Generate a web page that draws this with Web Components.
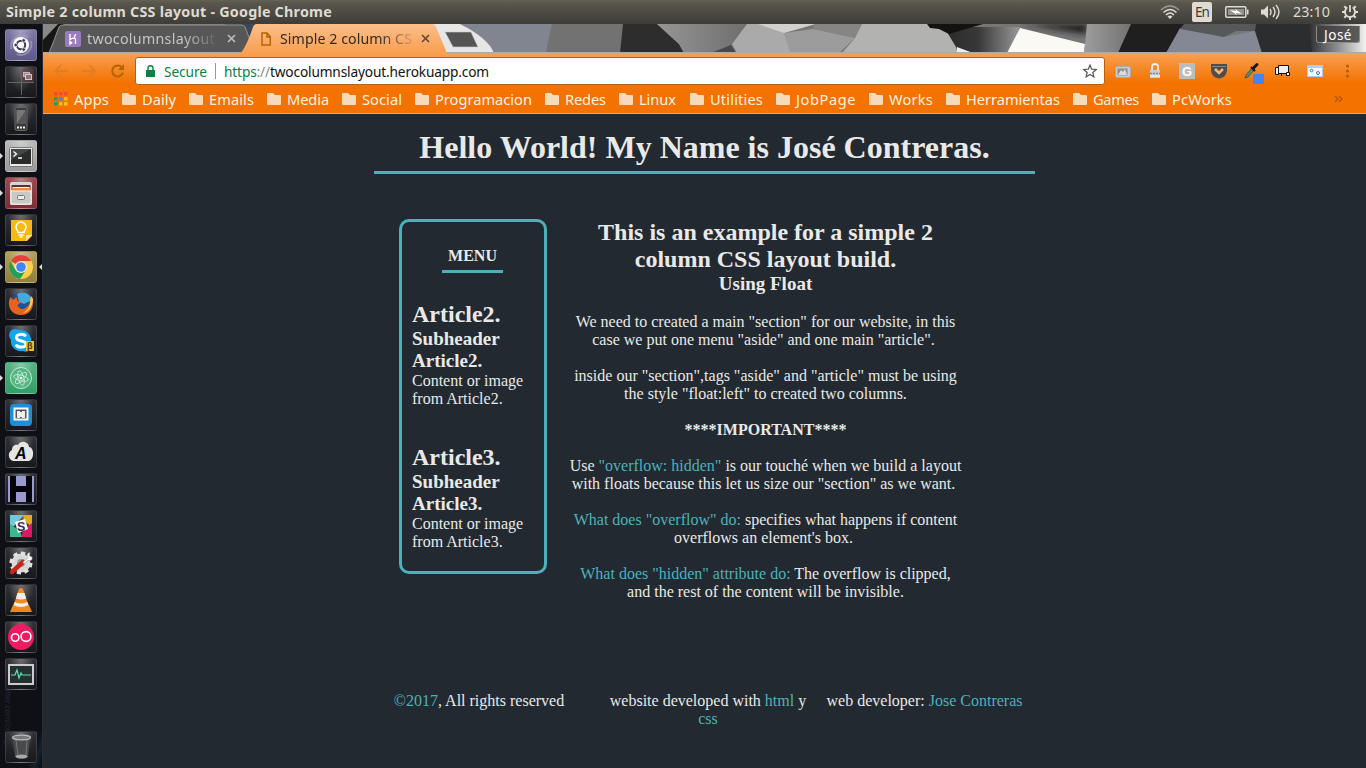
<!DOCTYPE html>
<html lang="en">
<head>
<meta charset="utf-8">
<title>Simple 2 column CSS layout</title>
<style>
html,body{margin:0;height:100%;overflow:hidden;background:#222930}
body{font-family:"Liberation Serif",serif}
</style>
</head>
<body>
<desk-shell>
  <top-panel slot="panel"></top-panel>
  <app-launcher slot="launcher">
    <launch-tile style="--c:#7c76a6;--d:#5f5a88"><svg viewBox="0 0 32 32"><g fill="none" stroke="#aaa5cc" stroke-width="2" opacity=".6"><path d="M6 20C5 8 16 4 23 8M26 12c2 11-7 16-14 13"/></g><circle cx="16" cy="16" r="8" fill="#fff"/><circle cx="16" cy="16" r="4.2" fill="none" stroke="#39355a" stroke-width="2"/><g fill="#39355a" stroke="#fff" stroke-width=".7"><circle cx="10.7" cy="16" r="1.8"/><circle cx="18.7" cy="11.4" r="1.8"/><circle cx="18.7" cy="20.6" r="1.8"/></g></svg></launch-tile>
    <launch-tile><svg viewBox="0 0 32 32"><path d="M17 3h12v13H17z" fill="#6b3b48" opacity=".5"/><path d="M3 16.500h26M16.500 4v25" stroke="#666" /><rect x="18.500" y="6.500" width="6" height="4" fill="#a88" stroke="#c5b5ba"/><rect x="20.500" y="8.500" width="6" height="5" fill="#8b7179" stroke="#d5c8cc"/></svg></launch-tile>
    <launch-tile><svg viewBox="0 0 32 32"><rect x="10" y="4.500" width="12" height="23" rx="1.500" fill="#3a3a3a" stroke="#666"/><rect x="11.500" y="7" width="9" height="14" fill="#777"/><path d="M11.500 21L20.500 8v13z" fill="#555"/><path d="M12 24.500h8" stroke="#eee" stroke-width="2" stroke-dasharray="2 1"/></svg></launch-tile>
    <launch-tile run style="--c:#b9b9b9;--d:#999"><svg viewBox="0 0 32 32"><rect x="4.500" y="7.500" width="23" height="19" rx="1" fill="#e8e8e8" stroke="#777"/><rect x="6" y="9" width="20" height="15" fill="#2a2c2b"/><path d="M6 9h20L6 20z" fill="#454746"/><path d="M8.500 11.500l3 2.500-3 2.500M13 18h4" fill="none" stroke="#fff" stroke-width="1.300"/></svg></launch-tile>
    <launch-tile run style="--c:#9c4851;--d:#7c2d36"><svg viewBox="0 0 32 32"><rect x="5" y="5" width="22" height="23" rx="2" fill="#d8d6d2"/><path d="M6.500 8h19v5h-19z" fill="#533"/><path d="M7 10h18v4H7z" fill="#ee8848"/><path d="M8 10.500h16" stroke="#fff"/><rect x="6" y="14" width="20" height="13" fill="#c9c8c6" stroke="#eee"/><rect x="12.500" y="18.500" width="7" height="4" rx="1" fill="#eee" stroke="#777"/></svg></launch-tile>
    <launch-tile><svg viewBox="0 0 32 32"><path d="M6 6h21v16l-5 5H6z" fill="#f9b90f"/><path d="M27 21l-6 6v-6z" fill="#ffe596"/><path d="M13 18.500c0-2-2-3-2-5.500a5 5 0 0 1 10 0c0 2.500-2 3.500-2 5.500z" fill="none" stroke="#fff" stroke-width="1.500"/><path d="M13.500 21h5M14.500 23h3" stroke="#fff" stroke-width="1.500"/></svg></launch-tile>
    <launch-tile run focused style="--c:#b2a05d;--d:#917f3c"><svg viewBox="0 0 32 32"><circle cx="16" cy="16" r="12" fill="#fed04a"/><path d="M16 16L5.600 10A12 12 0 0 1 26.400 10H16z" fill="#e04637"/><path d="M5.600 10A12 12 0 0 0 15 28l6-9-5-3-5.500 3z" fill="#279e57"/><circle cx="16" cy="16" r="6" fill="#eee"/><circle cx="16" cy="16" r="4.800" fill="#4286f4"/></svg></launch-tile>
    <launch-tile><svg viewBox="0 0 32 32"><circle cx="17" cy="15.500" r="11" fill="#16539e"/><path d="M12 6c6-4 14 0 15 6l-8 4-5-2z" fill="#47a8dc"/><path d="M28 11c1 10-4 16-12 16C8 27 3 21 4 13l1.500-4 3 3 3-3 1 4 4 1-4 3c2 5 7 5 10 1 3-2 4-7 4-10z" fill="#e9601f"/><path d="M28 11c0 7-4 13-10 14 5-3 7-7 7-12l1-5z" fill="#ffc73b"/></svg></launch-tile>
    <launch-tile><svg viewBox="0 0 32 32"><path d="M10 4c2 0 3 1 5 1 7 0 12 5 11 12 3 6-3 12-8 9-7 1-13-4-12-11C2 10 5 4 10 4z" fill="#10a7eb"/><path d="M20.500 11.500c-1-3-9-3-9 1 0 5 9.500 2 9.500 6.500 0 4-9 4-10 .5" fill="none" stroke="#fff" stroke-width="3"/><rect x="21" y="16" width="8" height="10" fill="#f0bc2e"/><text x="22" y="24" font-size="9" font-weight="bold" font-family="Liberation Sans" fill="#443208">β</text></svg></launch-tile>
    <launch-tile run style="--c:#58b185;--d:#32a068"><svg viewBox="0 0 32 32"><circle cx="16" cy="16" r="10.500" fill="#55b684" stroke="#c4e7d3"/><g fill="none" stroke="#c9e8d6" stroke-width=".9"><ellipse cx="16" cy="16" rx="7.500" ry="2.800" transform="rotate(15 16 16)"/><ellipse cx="16" cy="16" rx="7.500" ry="2.800" transform="rotate(75 16 16)"/><ellipse cx="16" cy="16" rx="7.500" ry="2.800" transform="rotate(135 16 16)"/></g><circle cx="16" cy="16" r="1.300" fill="#fff"/></svg></launch-tile>
    <launch-tile><svg viewBox="0 0 32 32"><rect x="5" y="5" width="22" height="22" rx="4" fill="#1b8fda"/><path d="M9.500 9.500h13v11h-13z" fill="#555" stroke="#fff" stroke-width="2"/><path d="M12 12h3v1h2v-1h3v7h-3v-1h-2v1h-3z" fill="#eee"/></svg></launch-tile>
    <launch-tile><svg viewBox="0 0 32 32"><path d="M8 25a6 6 0 0 1-1-11c0-5 4-6 6-5 3-6 11-3 11 2 5 0 6 12 0 14z" fill="#e5e5e5"/><text x="10" y="23" font-size="16" font-weight="bold" font-style="italic" font-family="Liberation Sans" fill="#050505">A</text></svg></launch-tile>
    <launch-tile><svg viewBox="0 0 32 32"><path d="M3 3h26v26H3z" fill="#9b9ad0"/><path d="M5 3h6v10h10V3h6v26h-6V19H11v10H5z" fill="#050509"/></svg></launch-tile>
    <launch-tile><svg viewBox="0 0 32 32"><path d="M5 5h14L9 16H5z" fill="#70cadb"/><path d="M18 5h9v12l-8-6z" fill="#e9a820"/><path d="M27 13v14H16l3-8z" fill="#e01765"/><path d="M5 14l10 7 2 6H5z" fill="#3eb890"/><path d="M10 12l10-3 3 10-10 4z" fill="#fff"/><text x="12" y="20.500" font-size="12.500" font-weight="bold" font-family="Liberation Sans" fill="#462148">S</text></svg></launch-tile>
    <launch-tile><svg viewBox="0 0 32 32"><circle cx="16" cy="16" r="9.500" fill="#d8d8d8" stroke="#e2e2e2" stroke-width="4" stroke-dasharray="4 3.400"/><circle cx="16" cy="16" r="4" fill="#999"/><path d="M7 25l11-10" stroke="#c72719" stroke-width="4.500" stroke-linecap="round"/><path d="M18 15l5-4c-2-3 0-6 2-5l-1 3 3 1c1 4-3 4-4 3l-4 4z" fill="#fff" stroke="#999" stroke-width=".5"/></svg></launch-tile>
    <launch-tile><svg viewBox="0 0 32 32"><path d="M8 21h16l3 7H5z" fill="#f38417"/><path d="M14 5q2-2 4 0l6 18q-8 5-16 0z" fill="#f08b1d"/><path d="M12.500 9h7l1.700 5.500q-5 2-10.300 0zM9.500 18q6.500 3 13 0l1 3q-7.500 4-15 0z" fill="#eee"/></svg></launch-tile>
    <launch-tile><svg viewBox="0 0 32 32"><circle cx="16" cy="16" r="13" fill="#ed1b60"/><g fill="none" stroke="#fff" stroke-width="1.600"><circle cx="10.200" cy="16.500" r="3.700"/><circle cx="21" cy="15.500" r="4.900"/></g></svg></launch-tile>
    <launch-tile><svg viewBox="0 0 32 32"><rect x="4" y="7" width="24" height="19" fill="#26302f" stroke="#ccc" stroke-width="2"/><path d="M6 17h4l2-5 2 8 2-5 1 2h9" fill="none" stroke="#5ce0bd" stroke-width="1.200"/></svg></launch-tile>
    <launch-tile end><svg viewBox="0 0 32 32"><path d="M8 6h17l-2 20q-6 3-13 0z" fill="#484b4b"/><path d="M11 9l2 15M22 9l-1 15" stroke="#777"/><ellipse cx="16.500" cy="6.500" rx="9" ry="2.300" fill="#777" stroke="#bbb" stroke-width="1.300"/><ellipse cx="16.500" cy="25.500" rx="6" ry="2" fill="#aaa"/></svg></launch-tile>
  </app-launcher>
  <tab-strip slot="main"></tab-strip>
  <nav-toolbar slot="main"></nav-toolbar>
  <bookmark-bar slot="main"></bookmark-bar>
  <site-page slot="main">
    <span slot="title">Hello World! My Name is José Contreras.</span>
    <side-article slot="menu"><span slot="h">Article2.</span><span slot="s">Subheader<br>Article2.</span>Content or image<br>from Article2.</side-article>
    <side-article slot="menu"><span slot="h">Article3.</span><span slot="s">Subheader<br>Article3.</span>Content or image<br>from Article3.</side-article>
  </site-page>
</desk-shell>

<script>
const make = (name, html, setup) => customElements.define(name, class extends HTMLElement {
  constructor() {
    super();
    const t = document.createElement('template');
    t.innerHTML = html;
    this.attachShadow({mode: 'open'}).append(t.content.cloneNode(true));
  }
  connectedCallback() { if (setup) setup(this, this.shadowRoot); }
});
const ui = 'font-family:"Noto Sans","Open Sans",sans-serif;';

make('desk-shell', `<style>
:host{display:grid;width:1366px;height:768px;grid-template:24px 744px/43px 1323px}
.p{grid-column:1/3}.m{display:flex;flex-direction:column}
</style><div class="p"><slot name="panel"></slot></div><slot name="launcher"></slot><div class="m"><slot name="main"></slot></div>`);

make('top-panel', `<style>
:host{display:flex;align-items:center;height:24px;box-sizing:border-box;padding:0 8px 0 6px;color:#dfdbd2;${ui}
 background:linear-gradient(#66634f,#5b584f 2px,#3d3c37);font-size:14.300px;line-height:24px}
.t{font-weight:bold;margin-right:auto}
.l{width:20px;height:20px;border-radius:2px;background:#dfdbd2;color:#3c3b37;display:flex;justify-content:center;line-height:20px;margin-left:12px;font-size:13.500px}
svg{display:block}
</style>
<fit-text class="t" w="326">Simple 2 column CSS layout - Google Chrome</fit-text>
<svg width="20" height="16" viewBox="0 0 20 16"><g fill="none" stroke="#dfdbd2" stroke-width="1.600"><path d="M1 6q9-8 18 0" opacity=".55"/><path d="M3.500 8.500q6.500-6 13 0M6 11q4-4 8 0"/></g><path d="M7.500 12.500q2.500-2 5 0L10 15z" fill="#dfdbd2"/></svg>
<span class="l"><fit-text w="14">En</fit-text></span>
<svg width="24" height="16" viewBox="0 0 24 16" style="margin-left:13px"><rect x=".8" y="2.800" width="20" height="10.500" rx="1" fill="none" stroke="#dfdbd2" stroke-width="1.500"/><path d="M3 5h16v6H3z" fill="#96938b"/><path d="M22 5.500h1.500v5H22z" fill="#dfdbd2"/><path d="M5 6l6 1-1-2 7 5-6-1 1 2z" fill="#fff"/></svg>
<svg width="21" height="18" viewBox="0 0 21 18" style="margin-left:11px"><path d="M1 6.500h3l4-4v13l-4-4H1z" fill="#dfdbd2"/><g fill="none" stroke="#dfdbd2" stroke-width="1.400"><path d="M10 6q2 3 0 6M13 4q4 5 0 10M16 2q6 7 0 14"/></g></svg>
<fit-text w="37" style="margin-left:12px">23:10</fit-text>
<svg width="16" height="18" viewBox="0 0 16 18" style="margin-left:12px"><circle cx="8" cy="9" r="5" fill="none" stroke="#dfdbd2" stroke-width="2"/><path d="M0 9h3M13 9h3M2.300 3.300l2 2M13.700 3.300l-2 2M2.300 14.700l2-2M13.700 14.700l-2-2M8 14v3" stroke="#dfdbd2" stroke-width="2"/><path d="M8 1v8" stroke="#4b4942" stroke-width="5"/><path d="M8 2v7" stroke="#dfdbd2" stroke-width="1.800"/></svg>`);

make('app-launcher', `<style>
:host{display:flex;flex-direction:column;gap:5px;box-sizing:border-box;width:43px;height:744px;padding:5px 0 5px 5px;border-right:1px solid #292e34;position:relative;
background:linear-gradient(110deg,transparent 80%,#15222d 88%,transparent 95%) 0 100%/43px 100px no-repeat,#0f1016}
.w{position:absolute;left:2px;top:657px;writing-mode:vertical-rl;font:8.500px/11px "Liberation Sans",sans-serif;color:#1d2735}
</style><span class="w">twitter.com/codigame</span><slot></slot>`);

make('launch-tile', `<style>
:host{--c:#303136;--d:#18191d;display:block;width:32px;height:32px;flex:none;position:relative}
:host([end]){margin-top:auto}
.b{width:32px;height:32px;box-sizing:border-box;border-radius:3px;border:1px solid rgba(255,255,255,.11);overflow:hidden;
background:radial-gradient(ellipse at 50% 0,rgba(255,255,255,.3),transparent 60%),linear-gradient(var(--c),var(--d))}
::slotted(svg){display:block;width:32px;height:32px;margin:-1px}
i{display:none;position:absolute;top:13px;border:3px solid transparent}
:host([run]) .r{display:block;left:-5px;border-left-color:#ddd;border-right:0}
:host([focused]) .f{display:block;right:-5px;border-right-color:#ddd;border-left:0}
</style><div class="b"><slot></slot></div><i class="r"></i><i class="f"></i>`);

make('tab-strip', `<style>
:host{display:grid;height:29px;grid-template:29px/1323px;${ui}font-size:14.200px;line-height:29px}
:host>*{grid-area:1/1}
svg{display:block}
.row{display:flex;align-items:center;height:29px;z-index:1}
.fade{-webkit-mask-image:linear-gradient(90deg,#000 75%,transparent 104%)}
.a{color:#c6c6c6;margin-left:6px}.b{color:#2f2a26;margin-left:7px}
.u{margin:2px 6px auto auto;width:44px;height:17px;box-sizing:border-box;border:1px solid #8a8a8a;border-top:0;border-radius:0 0 3px 3px;background:rgba(60,60,62,.8);color:#fff;display:flex;justify-content:center;line-height:19px;font-size:13.500px}
</style>
<svg width="1323" height="29" viewBox="43 24 1323 29">
<defs><filter id="s" x="-20%" y="-50%" width="140%" height="200%"><feGaussianBlur stdDeviation="3"/></filter><linearGradient id="o" x2="0" y2="1"><stop stop-color="#fbbe8b"/><stop offset="1" stop-color="#f99f50"/></linearGradient>
<linearGradient id="g" x2="1" y2="0"><stop stop-color="#969696"/><stop offset="1" stop-color="#6e6e6e"/></linearGradient>
<linearGradient id="k" x2="1" y2="0"><stop stop-color="#2a2a2a"/><stop offset=".45" stop-color="#383838"/><stop offset="1" stop-color="#9a9a9a"/></linearGradient>
<linearGradient id="m" x2="1" y2="0"><stop stop-color="#9d9d9d"/><stop offset="1" stop-color="#6f6f6f"/></linearGradient>
<linearGradient id="n" x2="1" y2="0"><stop stop-color="#333"/><stop offset=".55" stop-color="#999"/><stop offset="1" stop-color="#f2f2f0"/></linearGradient></defs>
<path d="M43 24h1323v29H43z" fill="#777"/>
<path d="M43 24h17L43 50z" fill="#888"/><path d="M43 53V40l15-16h6L49 53z" fill="#161616"/>
<path d="M225 24h50v29h-50z" fill="#3e4658"/>
<path d="M430 24h55l10 29h-60z" fill="#e6e6e6"/>
<path d="M460 24h92l-6 29h-52q-6-15-34-29z" fill="#81858f"/><path d="M552 24h71l-3 29h-74z" fill="#727272"/>
<path d="M623 24h34l22 20 5 9h-64z" fill="#2d2d2d"/>
<path d="M657 24h90l-15 22-18 5-30 2-5-9z" fill="url(#g)"/><path d="M711 53l20-8 5 8z" fill="#484848"/>
<path d="M747 24h69l-32 9 7 20h-54l-5-9z" fill="#aaa"/><path d="M758 24h57l-31 9z" fill="#d0d0d0"/>
<path d="M815 24h47l-7 14-42-9z" fill="#858585"/><path d="M784 33l29-4 42 9-16 15h-48z" fill="#9c9c9c"/>
<path d="M862 24h66l16 3 14 20-3 6H842l13-15z" fill="#b2b2b0"/>
<path d="M944 27h76l-13 26h-50l-1-6z" fill="url(#k)"/>
<path d="M927 24h56l-34 10-10-5-9-1z" fill="#121212"/><path d="M975 24h112v10l-67-10z" fill="#1e1e1e" filter="url(#s)"/>
<path d="M957 47l16 6h-17z" fill="#eee"/>
<path d="M1020 28l65 16-1 9h-77z" fill="#faf9f3"/><path d="M1087 24h48l-17 29h-34l1-9z" fill="url(#m)"/>
<path d="M1131 24h54l-19 29h-48z" fill="#1f1f1f"/><path d="M1180 28l44 9 31-6 7 22h-96z" fill="#848894"/><path d="M1184 24h72v7h-20l-12 6-44-8z" fill="#57585a"/>
<path d="M1256 24h62l7 29h-63l-7-22z" fill="#2b2d2f"/><path d="M1310 24h56v29h-54z" fill="url(#n)"/>
<path d="M49 53q6-15 10-26 1-2 4-2h178q3 0 4 2l10 26z" fill="#575757" stroke="#939393"/>
<path d="M241 53q6-8 12-26 1-3 4-3h175q3 0 4 3l11 26z" fill="url(#o)"/>
<path d="M445 32h26l7 15h-25z" fill="#555" stroke="#ccc" stroke-width=".6"/>
<path d="M43 52.500h198M447 52.500h919" stroke="#aaa"/>
</svg>
<div class="row">
<svg width="16" height="16" viewBox="0 0 16 16" style="margin-left:22px"><rect width="16" height="16" rx="2" fill="#9a7bc0"/><path d="M5 3v5.500q5-3 5.500 0V13M5 10.500V13l1.700-1.300zM10.500 3q0 2-1.500 3" fill="none" stroke="#fff" stroke-width="1.400"/></svg>
<fit-text class="a fade" w="128">twocolumnslayout</fit-text>
<svg width="9" height="9" viewBox="0 0 9 9" style="margin-left:12px"><path d="M1 1l7 7M8 1L1 8" stroke="#bbb" stroke-width="1.700"/></svg>
<svg width="10" height="14" viewBox="0 0 10 14" style="margin-left:25px"><path d="M1 1h5l3.300 3.500V13H1zM6 1v4h3" fill="none" stroke="#ba6200" stroke-width="1.500"/></svg>
<fit-text class="b fade" w="132" style="margin-left:9px">Simple 2 column CS</fit-text>
<svg width="9" height="9" viewBox="0 0 9 9" style="margin-left:9px"><path d="M1 1l7 7M8 1L1 8" stroke="#684a33" stroke-width="1.700"/></svg>
<span class="u"><fit-text w="28">José</fit-text></span>
</div>`);

make('nav-toolbar', `<style>
:host{display:flex;align-items:center;height:32px;box-sizing:border-box;padding:4px 0 0 10px;background:linear-gradient(#f9a052,#f37200 94%);${ui}font-size:13.700px}
svg{display:block;flex:none}
.box{display:flex;align-items:center;box-sizing:border-box;width:970px;height:28px;border:1px solid #b5610f;border-radius:3px;background:#fff;color:#111;margin-left:8px;padding-left:10px}
.g{color:#0b8043}.v{width:1px;height:16px;background:#999;margin:0 8px}
.x{display:flex;margin-left:10px;gap:16px;align-items:center}.x svg{width:16px;height:16px;overflow:visible}
</style>
<svg width="74" height="18" viewBox="0 0 74 18"><g fill="none" stroke="#e37d22" stroke-width="1.800"><path d="M15 9H2M8 3L2 9l6 6M29 9h13M36 3l6 6-6 6"/></g><path d="M69 5.500a5.500 5.500 0 1 0 1 5" fill="none" stroke="#b86200" stroke-width="2"/><path d="M71 2v6h-6z" fill="#b86200"/></svg>
<div class="box">
<svg width="9" height="12" viewBox="0 0 9 12"><path d="M0 5h9v7H0z" fill="#0b8043"/><path d="M2 5V3q0-2.200 2.500-2.200T7 3v2" fill="none" stroke="#0b8043" stroke-width="1.400"/></svg>
<fit-text class="g" w="43" style="margin-left:9px">Secure</fit-text><span class="v"></span>
<fit-text w="265"><span><span class="g">https</span><span style="color:#888">://</span>twocolumnslayout.herokuapp.com</span></fit-text>
<svg width="14" height="14" viewBox="0 0 14 14" style="margin:0 7px 0 auto"><path d="M7 1l1.700 4.200 4.600.3-3.500 3 1.100 4.400L7 10.500l-3.900 2.400 1.100-4.400-3.500-3 4.600-.3z" fill="none" stroke="#555" stroke-width="1.200"/></svg>
</div>
<div class="x">
<svg viewBox="0 0 16 16"><path d="M4.500 0L8 3.500 11.500 0" fill="none" stroke="#aaa"/><rect x=".5" y="3.500" width="15" height="11" rx="2" fill="#ccc" stroke="#aaa"/><path d="M2.500 5.500h10v7h-10z" fill="#8d8d8d"/><path d="M3 12l3-5 2 2 2-3 2 6z" fill="#ddd"/></svg>
<svg viewBox="0 0 16 16"><path d="M5 8V4q0-3 3-3t3 3v4" fill="none" stroke="#eee" stroke-width="1.800"/><path d="M3 7h10v8H3z" fill="#ccc"/><path d="M3 10.500h10" stroke="#888" stroke-dasharray="2 1" stroke-width="1.500"/><path d="M3 13h10" stroke="#fff"/></svg>
<svg viewBox="0 0 16 16"><path d="M0 0h16v16H0z" fill="#bdbdbd"/><text x="3" y="13" font-family="Liberation Sans" font-size="13" font-weight="bold" fill="#fff">G</text></svg>
<svg viewBox="0 0 16 16"><path d="M0 1h16v6q0 7-8 8.500Q0 14 0 7z" fill="#4d4d4d"/><path d="M1 3.500h14" stroke="#888"/><path d="M4 6l4 4 4-4" fill="none" stroke="#ffb377" stroke-width="2.500"/></svg>
<svg viewBox="0 0 16 16"><path d="M2 15l1-3 6-7 2 2-6 7z" fill="#5a8e65" stroke="#444" stroke-width=".8"/><path d="M8 4l4 4" stroke="#181818" stroke-width="2"/><path d="M10.500 5L14 1.500" stroke="#181818" stroke-width="3" stroke-linecap="round"/><path d="M10 11h11v10H10z" fill="#4285f4"/></svg>
<svg viewBox="0 0 16 16"><path d="M3.500 2.500h10v8h-10z" fill="#eee" stroke="#111"/><path d="M.5 4.500h3v7h-3zM11.500 9.500h3v3h-3z" fill="#fff" stroke="#111"/><path d="M6.500 10v3" stroke="#111"/></svg>
<svg viewBox="0 0 16 16"><path d="M.5 2.500h15v11H.5z" fill="#f4f8fd" stroke="#abcaf0"/><path d="M1 3h14v2H1z" fill="#b2cff2"/><circle cx="4.500" cy="7.500" r="1.300" fill="none" stroke="#3d77bf"/><circle cx="11" cy="10" r="1.500" fill="none" stroke="#3d77bf"/></svg>
<svg viewBox="0 0 16 16"><g fill="#b45c05"><circle cx="8.500" cy="3" r="1.500"/><circle cx="8.500" cy="8" r="1.500"/><circle cx="8.500" cy="13" r="1.500"/></g></svg>
</div>`);

make('bookmark-bar', `<style>
:host{display:flex;height:29px;box-sizing:border-box;border-bottom:1px solid #d6ac86;background:#f37200;color:#fff3e2;padding-left:11px;${ui}font-size:14.600px;line-height:28px}
div{display:flex;align-items:center;box-sizing:border-box;flex:none;gap:6px}
svg{display:block;flex:none}.more{margin:0 23px 0 auto;align-self:center}
</style>
<svg class="more" width="9" height="8" viewBox="0 0 9 8"><path d="M1 1l3 3-3 3M5 1l3 3-3 3" fill="none" stroke="#b85700" stroke-width="1.400"/></svg>`,
(el, root) => {
  const marks = [['Apps',68,35],['Daily',67,34],['Emails',78,45],['Media',75,42],['Social',73,40],['Programacion',130,97],['Redes',74,41],['Linux',71,37],['Utilities',86,53],['JobPage',93,60],['Works',77,44],['Herramientas',127,94],['Games',79,46],['PcWorks',84,60]];
  const folder = '<svg width="14" height="12" viewBox="0 0 14 12"><path d="M0 1q0-1 1-1h5l2 2h5q1 0 1 1v8q0 1-1 1H1q-1 0-1-1z" fill="#f6dab9"/></svg>';
  const colors = ['#f44a3c','#f44a3c','#f44a3c','#22a05d','#4587f3','#fdbb12','#22a05d','#fdbb12','#fdbb12'];
  const apps = '<svg width="14" height="14" viewBox="0 0 14 14">' + colors.map((c,i)=>`<path d="M${i%3*5} ${(i/3|0)*5}h3.500v3.500h-3.500z" fill="${c}"/>`).join('') + '</svg>';
  const more = root.querySelector('.more');
  marks.forEach(([name, width, text], i) => {
    const d = document.createElement('div');
    d.style.width = width + 'px';
    d.innerHTML = (i ? folder : apps) + `<fit-text w="${text}">${name}</fit-text>`;
    root.insertBefore(d, more);
  });
});

make('side-article', `<style>
:host{display:block;font-size:16px;line-height:18px;margin-bottom:36px;white-space:nowrap}
:host(:last-of-type){margin-bottom:0}
h2{margin:0;font-size:24px;line-height:27px}h3{margin:0;font-size:19px;line-height:22px}
</style><h2><slot name="h"></slot></h2><h3><slot name="s"></slot></h3><slot></slot>`);

make('site-page', `<style>
:host{display:block;flex:1;box-sizing:border-box;padding:15px 331px 0;background:#222930;color:#e9e9e9;font-size:16px;line-height:18px}
h1,h2,h3{margin:0}
h1{font-size:32px;line-height:36px;height:42px;border-bottom:3px solid #4eb1ba;text-align:center;white-space:nowrap}
main{display:flex;margin-top:45px;padding-left:25px;height:473px;align-items:flex-start}
aside{box-sizing:border-box;width:148px;height:355px;border:3px solid #4eb1ba;border-radius:10px;padding:25px 0 0 10px}
.menu{width:61px;height:23px;margin:0 0 28px 30px;border-bottom:3px solid #4eb1ba;text-align:center;font-weight:bold}
article{width:397px;margin-left:20px;text-align:center;white-space:nowrap}
h2{font-size:24px;line-height:27px}h3{font-size:19px;line-height:22px;margin-bottom:18px}
a{color:#4eb1ba}
footer{display:flex;text-align:center;white-space:nowrap}
footer div{width:216px}.one{margin-left:-3px}
</style>
<h1><slot name="title"></slot></h1>
<main>
<aside><div class="menu">MENU</div><slot name="menu"></slot></aside>
<article>
<h2>This is an example for a simple 2<br>column CSS layout build.</h2><h3>Using Float</h3>
We need to created a main "section" for our website, in this<br>case we put one menu "aside" and one main "article".&nbsp;<br><br>
inside our "section",tags "aside" and "article" must be using<br>the style "float:left" to created two columns.<br><br>
<b>****IMPORTANT****</b><br><br>
Use <a>"overflow: hidden"</a> is our touché when we build a layout<br>with floats because this let us size our "section" as we want.&nbsp;<br><br>
<a>What does "overflow" do:</a> specifies what happens if content<br>overflows an element's box.&nbsp;<br><br>
<a>What does "hidden" attribute do:</a> The overflow is clipped,<br>and the rest of the content will be invisible.
</article>
</main>
<footer><div class="one"><a>©2017</a>, All rights reserved</div><div style="margin-left:13px">website developed with <a>html</a> y<br><a>css</a></div><div style="margin-left:.5px">web developer: <a>Jose Contreras</a></div></footer>`);

/* Spreads the letters of its text over the width given in "w". */
make('fit-text', `<style>:host{display:block;flex:none;white-space:nowrap}span{display:inline-block}</style><span><slot></slot></span>`,
(el, root) => {
  const w = +el.getAttribute('w'), s = root.querySelector('span');
  el.style.width = w + 'px';
  s.style.letterSpacing = (w - s.getBoundingClientRect().width) / el.textContent.length + 'px';
});
</script>
</body>
</html>
